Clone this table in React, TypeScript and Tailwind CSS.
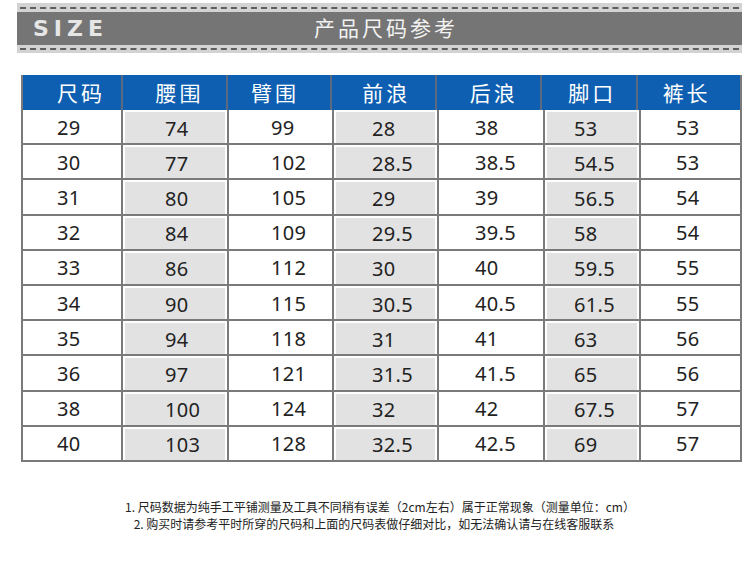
import React from 'react'

const cols = [
  { name: '尺码', w: 'w-[98px]', shade: false, pl: 'pl-[34px]', hpl: 'pl-[34px]' },
  { name: '腰围', w: 'w-[106px]', shade: true, pl: 'pl-[40px]', hpl: 'pl-[33px]' },
  { name: '臂围', w: 'w-[105px]', shade: false, pl: 'pl-[42px]', hpl: 'pl-[23px]' },
  { name: '前浪', w: 'w-[105px]', shade: true, pl: 'pl-[36px]', hpl: 'pl-[30px]' },
  { name: '后浪', w: 'w-[106px]', shade: false, pl: 'pl-[36px]', hpl: 'pl-[33px]' },
  { name: '脚口', w: 'w-[96px]', shade: true, pl: 'pl-[27px]', hpl: 'pl-[26px]' },
  { name: '裤长', w: 'w-[105px]', shade: false, pl: 'pl-[35px]', hpl: 'pl-[25px]' },
]

// row data, one array per size
const rows: string[][] = [
  ['29', '74', '99', '28', '38', '53', '53'],
  ['30', '77', '102', '28.5', '38.5', '54.5', '53'],
  ['31', '80', '105', '29', '39', '56.5', '54'],
  ['32', '84', '109', '29.5', '39.5', '58', '54'],
  ['33', '86', '112', '30', '40', '59.5', '55'],
  ['34', '90', '115', '30.5', '40.5', '61.5', '55'],
  ['35', '94', '118', '31', '41', '63', '56'],
  ['36', '97', '121', '31.5', '41.5', '65', '56'],
  ['38', '100', '124', '32', '42', '67.5', '57'],
  ['40', '103', '128', '32.5', '42.5', '69', '57'],
]

const Dashes = () => (
  <div className="h-[2px] mx-[3px] border-t-2 border-dashed border-[#5f5f5f]" />
)

export default function App() {
  return (
    <div className="w-[750px] h-[563px] bg-white overflow-hidden font-['Noto_Sans','Noto_Sans_CJK_SC',sans-serif]">
      {/* title band */}
      <div className="ml-[17px] mt-[3px] w-[725px] h-[50px] bg-[#d3d3d3] flex flex-col pt-[4px]">
        <Dashes />
        <div className="mt-[3px] h-[33px] bg-[#757575] flex items-center relative">
          <span className="pl-[16px] text-[22px] font-bold tracking-[5px] text-[#e6e6e6] leading-none font-['DejaVu_Sans',sans-serif]">
            SIZE
          </span>
          <span className="absolute left-[297px] top-[5px] text-[21px] tracking-[3px] text-[#f2f2f2] leading-none font-['Noto_Sans_CJK_SC',sans-serif]">
            产品尺码参考
          </span>
        </div>
        <div className="mt-[3px]">
          <Dashes />
        </div>
      </div>

      {/* table */}
      <div className="ml-[21px] mt-[22px] w-[721px] border-x-2 border-[#7a7a7a]">
        <div className="flex h-[35px] bg-[#0e5fb1]">
          {cols.map((c, i) => (
            <div
              key={c.name}
              className={`${c.w} ${c.hpl} flex items-center text-[21px] tracking-[3px] text-white font-['Noto_Sans_CJK_SC',sans-serif] ${i > 0 ? 'border-l-2 border-[#5a6b80]' : ''}`}
            >
              {c.name}
            </div>
          ))}
        </div>
        {rows.map((r, ri) => (
          <div key={ri} className="flex h-[35.2px] border-b-2 border-[#7a7a7a]">
            {r.map((v, ci) => {
              const c = cols[ci]
              return (
                <div
                  key={ci}
                  className={`${c.w} shrink-0 flex ${ci > 0 ? 'border-l-2 border-[#7a7a7a]' : ''} ${c.shade ? 'p-[2px] pb-0' : ''}`}
                >
                  <div
                    className={`flex-1 flex items-center pt-[2px] ${c.pl} ${c.shade ? 'bg-[#e2e2e2]' : ''} text-[20px] tracking-[0.3px] text-[#222]`}
                  >
                    {v}
                  </div>
                </div>
              )
            })}
          </div>
        ))}
      </div>

      {/* notes */}
      <div className="mt-[36px] flex flex-col items-center text-[12px] leading-[17px] text-[#222] font-['Noto_Sans_CJK_SC',sans-serif]">
        <div className="pl-[10px]">1. 尺码数据为纯手工平铺测量及工具不同稍有误差（2cm左右）属于正常现象（测量单位：cm）</div>
        <div className="-ml-[2px]">2. 购买时请参考平时所穿的尺码和上面的尺码表做仔细对比，如无法确认请与在线客服联系</div>
      </div>
    </div>
  )
}
